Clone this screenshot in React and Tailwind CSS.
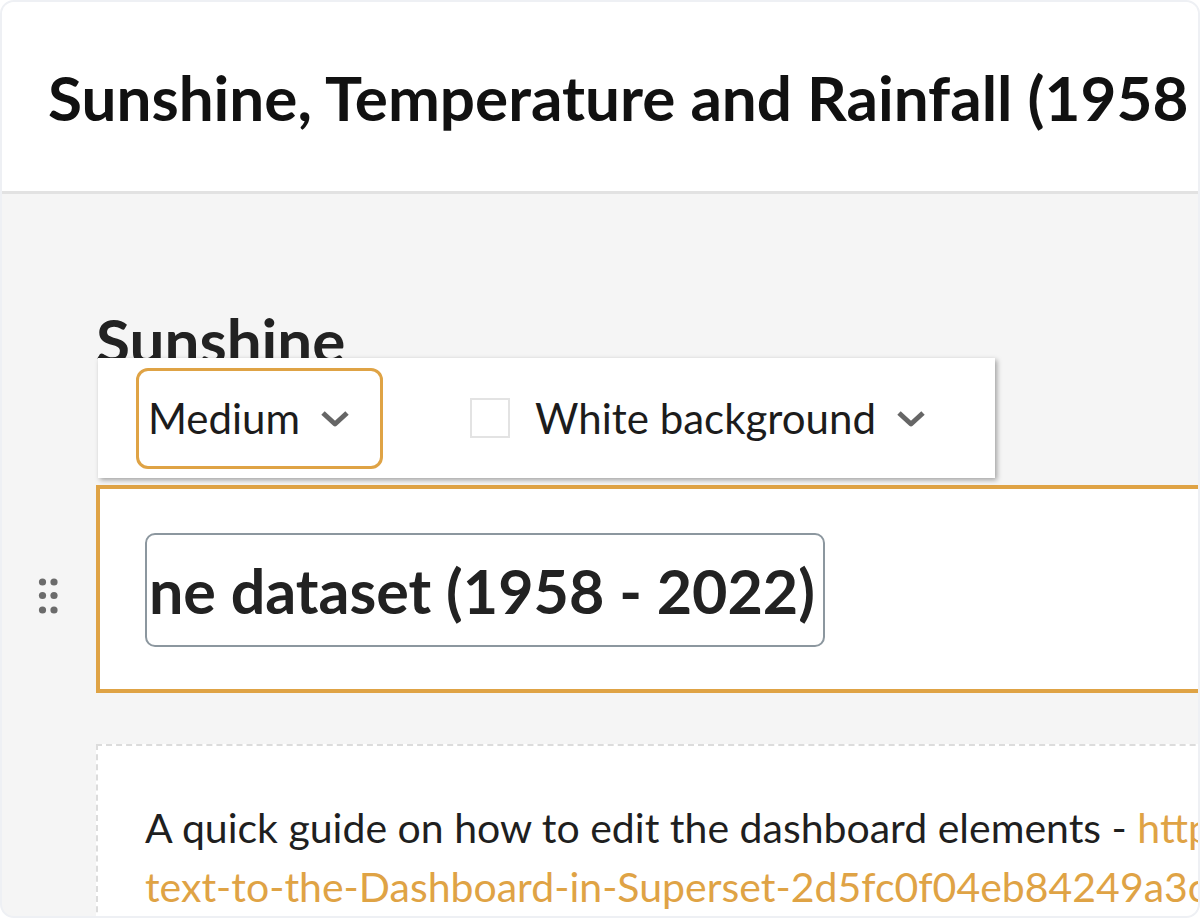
import { useState } from 'react'

function Chevron() {
  return (
    <svg width="30" height="18" viewBox="0 0 30 18" className="shrink-0">
      <polyline points="3,3 15,14 27,3" fill="none" stroke="#666" strokeWidth="5" strokeLinejoin="round" />
    </svg>
  )
}

function DragHandle() {
  const dots = [
    [4.5, 4], [16, 4],
    [4.5, 17.5], [16, 17.5],
    [4.5, 32], [16, 32],
  ]
  return (
    <svg width="21" height="36" viewBox="0 0 21 36">
      {dots.map(([cx, cy], i) => (
        <circle key={i} cx={cx} cy={cy} r="3.6" fill="#6b6b6b" />
      ))}
    </svg>
  )
}

function Toolbar({ white, setWhite }) {
  return (
    <div className="absolute -top-[131px] -left-[2px] z-10 flex h-[120px] w-[897px] items-center bg-white shadow-[2px_2px_5px_rgba(0,0,0,0.35)]">
      <div className="ml-[38px] flex h-[101px] w-[247px] items-center rounded-[12px] border-[3px] border-[#dfa345] pl-[9px]">
        <span className="text-[42px] leading-none text-[#1c1c1c]">Medium</span>
        <span className="ml-[20px] mt-[2px]"><Chevron /></span>
      </div>
      <button
        onClick={() => setWhite(!white)}
        className="ml-[87px] h-[40px] w-[40px] border-2 border-[#e3e3e3] bg-white"
      />
      <span className="ml-[25px] text-[42px] leading-none text-[#1c1c1c]">White background</span>
      <span className="ml-[20px] mt-[2px]"><Chevron /></span>
    </div>
  )
}

export default function App() {
  const [white, setWhite] = useState(false)

  return (
    <div className="h-[918px] w-[1200px] overflow-hidden rounded-[14px] border-2 border-[#eef0f4] bg-[#f5f5f5] font-['Lato','Noto_Sans',sans-serif]">
      <header className="flex h-[192px] items-center overflow-hidden whitespace-nowrap border-b-[3px] border-[#e2e2e2] bg-white pl-[46px]">
        <h1 className="text-[62px] font-bold leading-none text-[#111]">
          Sunshine, Temperature and Rainfall (1958 - 2022)
        </h1>
      </header>

      <main className="pl-[94px]">
        <h2 className="mt-[115px] whitespace-nowrap text-[62px] font-bold leading-none text-[#222]">Sunshine</h2>

        <div className="relative mt-[114px] h-[208px] w-[1200px] border-4 border-[#dfa345] bg-white">
          <Toolbar white={white} setWhite={setWhite} />
          <div className="absolute left-[-62px] top-[89px]">
            <DragHandle />
          </div>
          <div className="ml-[45px] mt-[44px] flex h-[114px] w-[680px] items-center justify-end overflow-hidden whitespace-nowrap rounded-[10px] border-2 border-[#8c979f] pr-[8px]">
            <span className="text-[61px] font-bold leading-none text-[#222]">Sunshine dataset (1958 - 2022)</span>
          </div>
        </div>

        <div className="mt-[51px] h-[300px] w-[1200px] border-2 border-dashed border-[#dcdcdc] bg-white pl-[47px] pt-[52px]">
          <p className="whitespace-nowrap text-[41px] leading-[59px] text-[#1f1f1f]">
            A quick guide on how to edit the dashboard elements -{' '}
            <a className="text-[#dfa345]" href="#">https://www.notion.so/Adding-</a>
          </p>
          <p className="whitespace-nowrap text-[41px] leading-[59px]">
            <a className="text-[#dfa345]" href="#">text-to-the-Dashboard-in-Superset-2d5fc0f04eb84249a3c1</a>
          </p>
        </div>
      </main>
    </div>
  )
}
